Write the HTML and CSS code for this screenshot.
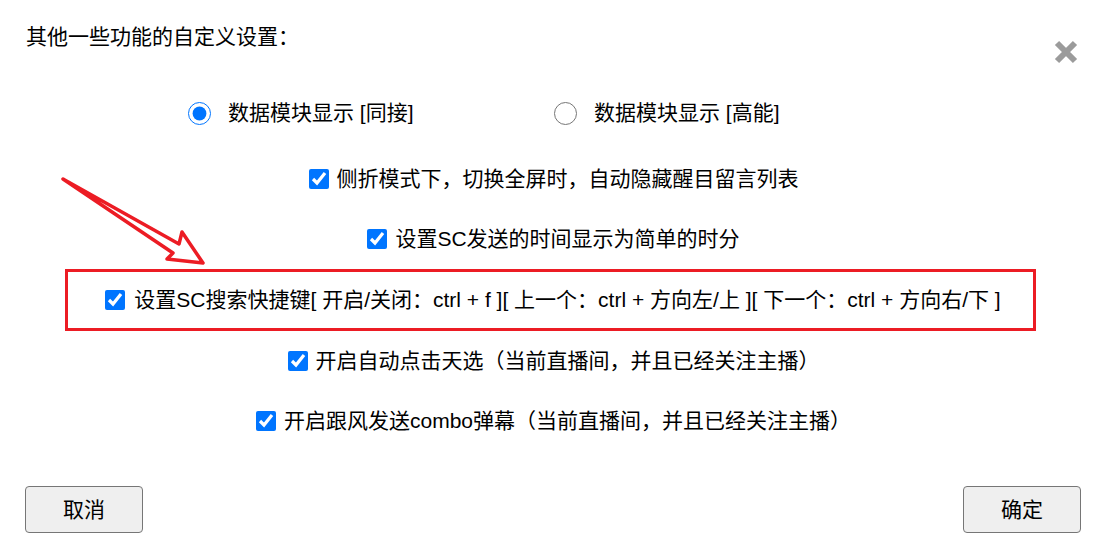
FILE: index.html
```html
<!DOCTYPE html>
<html lang="zh-CN">
<head>
<meta charset="utf-8">
<title>设置</title>
<link rel="stylesheet" href="styles.css">
</head>
<body>
<div class="dialog">
  <div class="title">其他一些功能的自定义设置：</div>
  <button class="close" aria-label="关闭">
    <svg width="24" height="24" viewBox="0 0 24 24"><path d="M3 3L21 21M21 3L3 21" stroke="#9b9b9b" stroke-width="6" fill="none"/></svg>
  </button>

  <div class="radios">
    <label class="radio-item"><input type="radio" name="mode" checked><span>数据模块显示 [同接]</span></label>
    <label class="radio-item"><input type="radio" name="mode"><span>数据模块显示 [高能]</span></label>
  </div>

  <div class="options">
    <label class="opt"><input type="checkbox" checked><span>侧折模式下，切换全屏时，自动隐藏醒目留言列表</span></label>
    <label class="opt"><input type="checkbox" checked><span>设置SC发送的时间显示为简单的时分</span></label>
    <label class="opt highlight"><input type="checkbox" checked><span>设置SC搜索快捷键[ 开启/关闭：ctrl + f ][ 上一个：ctrl + 方向左/上 ][ 下一个：ctrl + 方向右/下 ]</span></label>
    <label class="opt"><input type="checkbox" checked><span>开启自动点击天选（当前直播间，并且已经关注主播）</span></label>
    <label class="opt"><input type="checkbox" checked><span>开启跟风发送combo弹幕（当前直播间，并且已经关注主播）</span></label>
  </div>

  <div class="footer">
    <button class="btn">取消</button>
    <button class="btn">确定</button>
  </div>

  <svg class="arrow" width="1104" height="558" viewBox="0 0 1104 558">
    <path d="M63 179 L179 244 L182 232 L203 263 L167 259 L173 253 Z" fill="none" stroke="#ec1c24" stroke-width="3.5" stroke-linejoin="round"/>
  </svg>
</div>
</body>
</html>
```

FILE: styles.css
```css
html, body {
  margin: 0;
  padding: 0;
  background: #ffffff;
}

body {
  font-family: "Liberation Sans", "Noto Sans CJK SC", sans-serif;
  font-size: 21px;
  color: #000;
}

.dialog {
  position: relative;
  width: 1104px;
  height: 558px;
  box-sizing: border-box;
  padding-top: 22px;
}

.title {
  padding-left: 26px;
  line-height: 30px;
  height: 30px;
}

.close {
  position: absolute;
  left: 1054px;
  top: 40px;
  width: 24px;
  height: 24px;
  padding: 0;
  border: 0;
  background: transparent;
  display: block;
}

.close svg {
  display: block;
}

.radios {
  margin-top: 46px;
  display: flex;
  justify-content: center;
  height: 30px;
}

.radio-item {
  width: 366px;
  display: flex;
  align-items: center;
  gap: 17px;
  line-height: 30px;
}

.radio-item input {
  width: 23px;
  height: 23px;
  margin: 0 0 0 2px;
}

.options {
  margin-top: 21px;
  display: flex;
  flex-direction: column;
}

.opt {
  height: 60px;
  display: flex;
  align-items: center;
  justify-content: center;
  gap: 8px;
  line-height: 30px;
  padding-left: 3px;
}

.opt input {
  width: 20px;
  height: 20px;
  margin: 0;
  flex: none;
}

.opt.highlight {
  height: 62px;
  width: 971px;
  box-sizing: border-box;
  margin: 0 0 0 65px;
  padding-left: 5px;
  gap: 9px;
  border: 3px solid #ec1c24;
}

.footer {
  margin-top: 35px;
  padding: 0 23px 0 25px;
  display: flex;
  justify-content: space-between;
}

.btn {
  width: 118px;
  height: 47px;
  box-sizing: border-box;
  border: 1px solid #767676;
  border-radius: 4px;
  background: #efefef;
  font-family: "Liberation Sans", "Noto Sans CJK SC", sans-serif;
  font-size: 21px;
  color: #000;
  padding: 0 0 4px 0;
}

.arrow {
  position: absolute;
  left: 0;
  top: 0;
  pointer-events: none;
}
```
